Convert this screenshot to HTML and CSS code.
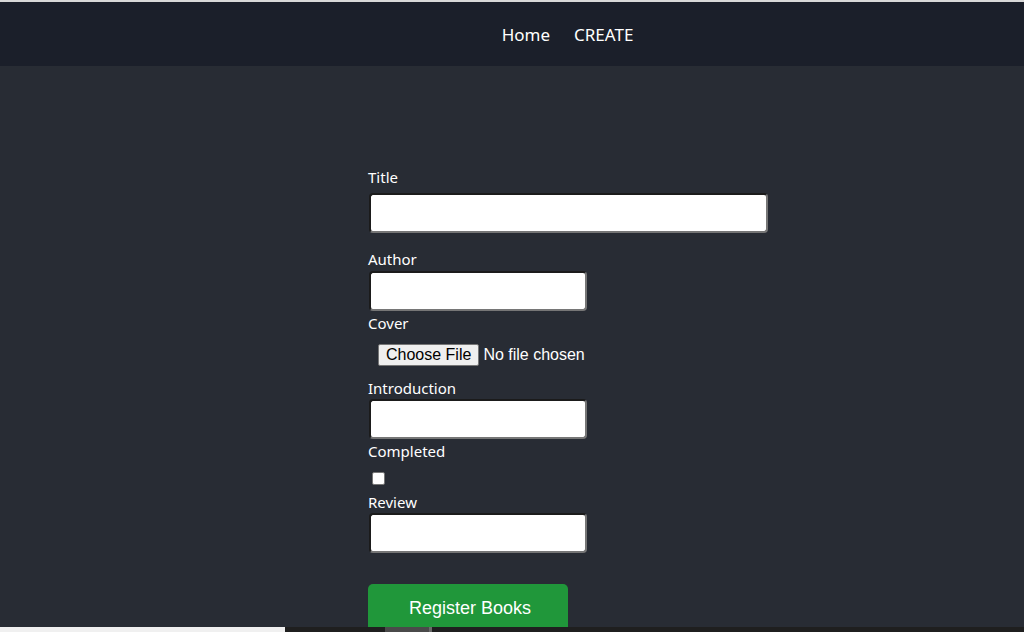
FILE: index.html
```html
<!DOCTYPE html>
<html lang="en">
<head>
<meta charset="utf-8">
<title>Register Books</title>
<link rel="stylesheet" href="styles.css">
</head>
<body>
<div class="page">
  <header class="nav">
    <a class="nav-link" href="#">Home</a>
    <a class="nav-link" href="#">CREATE</a>
  </header>
  <main class="content">
    <form class="book-form">
      <label class="field-label" for="title">Title</label>
      <input class="text-input wide" id="title" type="text">
      <label class="field-label gap-lg" for="author">Author</label>
      <input class="text-input" id="author" type="text">
      <label class="field-label low" for="cover">Cover</label>
      <div class="file-row">
        <span class="file-btn">Choose File</span><span class="file-text">No file chosen</span>
      </div>
      <label class="field-label low intro" for="intro">Introduction</label>
      <input class="text-input" id="intro" type="text">
      <label class="field-label low" for="completed">Completed</label>
      <div class="check-row"><span class="checkbox" id="completed"></span></div>
      <label class="field-label low" for="review">Review</label>
      <input class="text-input" id="review" type="text">
      <button class="submit-btn" type="button">Register Books</button>
    </form>
  </main>
</div>
<div class="hscroll">
  <div class="hscroll-left"></div>
  <div class="hscroll-track"><div class="hscroll-thumb"></div><div class="hscroll-edge"></div></div>
</div>
</body>
</html>
```
FILE: styles.css
```css
html, body {
  margin: 0;
  padding: 0;
  background: #282c34;
  overflow: hidden;
  height: 100%;
}

.page {
  font-family: "Noto Sans", "Open Sans", sans-serif;
  color: #ffffff;
}

.nav {
  box-sizing: border-box;
  height: 66px;
  padding-left: 112px;
  border-top: 2px solid #d8d8d8;
  background: #1b1f2a;
  display: flex;
  justify-content: center;
  align-items: center;
  gap: 25px;
}

.nav-link {
  color: #ffffff;
  text-decoration: none;
  font-size: 17px;
  margin-left: -1px;
}

.content {
  display: flex;
  justify-content: center;
  padding: 100px 0 0 112px;
}

.book-form {
  width: 400px;
  display: flex;
  flex-direction: column;
  align-items: flex-start;
}

.field-label {
  font-size: 15px;
  line-height: 20px;
  height: 20px;
  margin-top: 1px;
}

.field-label.low {
  line-height: 22px;
}

.field-label.gap-lg {
  margin-top: 16px;
}

.field-label.intro {
  margin-top: 11px;
}

.text-input {
  box-sizing: border-box;
  width: 218px;
  height: 40px;
  margin: 2px 0 0 1px;
  border: 2px solid;
  border-color: #1b1b1b #767676 #767676 #1b1b1b;
  border-radius: 4px;
  background: #ffffff;
  padding: 0 6px;
  font-family: "Liberation Sans", Arial, sans-serif;
  font-size: 14px;
}

.text-input.wide {
  width: 399px;
  margin-top: 6px;
}

.file-row {
  display: flex;
  align-items: center;
  margin: 12px 0 0 10px;
  height: 22px;
  font-family: "Liberation Sans", Arial, sans-serif;
  font-size: 16px;
}

.file-btn {
  box-sizing: border-box;
  height: 22px;
  padding: 0 7px;
  line-height: 20px;
  background: #efefef;
  color: #000000;
  border: 1px solid #767676;
  border-radius: 2px;
}

.file-text {
  margin-left: 4px;
  color: #ffffff;
}

.check-row {
  height: 30px;
  display: flex;
  align-items: flex-start;
}

.checkbox {
  box-sizing: border-box;
  display: block;
  width: 13px;
  height: 13px;
  margin: 12px 0 0 4px;
  background: #ffffff;
  border: 1px solid #767676;
  border-radius: 2px;
}

.submit-btn {
  margin-top: 31px;
  width: 200px;
  height: 50px;
  border: none;
  border-radius: 5px;
  background: #20973a;
  color: #ffffff;
  font-family: "Liberation Sans", Arial, sans-serif;
  font-size: 18px;
  padding: 0 0 2px 4px;
}

.hscroll {
  position: fixed;
  left: 0;
  right: 0;
  bottom: 0;
  height: 5px;
  display: flex;
}

.hscroll-left {
  width: 285px;
  background: #f0f0f0;
}

.hscroll-track {
  flex: 1;
  background: #1f1f1f;
  display: flex;
  padding-left: 100px;
}

.hscroll-thumb {
  width: 44px;
  background: #4a4a4a;
}

.hscroll-edge {
  width: 3px;
  background: #6a6a6a;
}
```
